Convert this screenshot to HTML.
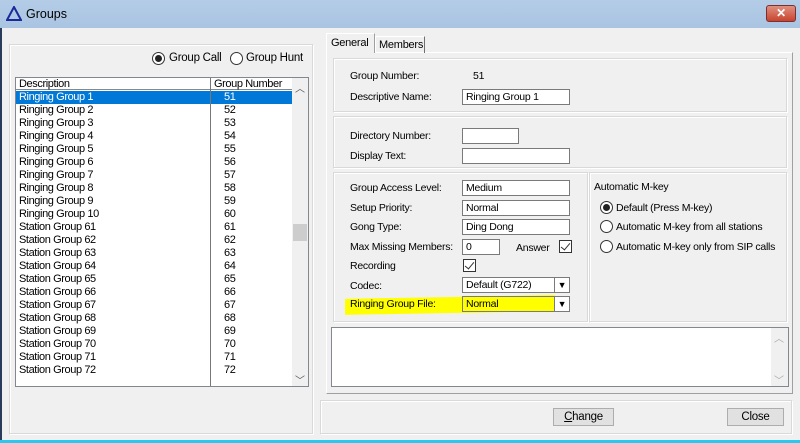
<!DOCTYPE html><html><head><style>
*{margin:0;padding:0;box-sizing:border-box;white-space:nowrap}
body{width:800px;height:443px;overflow:hidden;background:#f0f0f0;font-family:"Liberation Sans",sans-serif;font-size:10.5px;letter-spacing:-0.25px;color:#000;position:relative}
.a{position:absolute}
.box{position:absolute;border:1px solid #d9d9d9;border-right-color:#fff;border-bottom-color:#fff;box-shadow:inset -1px -1px 0 #d9d9d9,inset 1px 1px 0 #fff}
.in{position:absolute;background:#fff;border:1px solid #7a7a7a;height:16px;padding:1px 3px;line-height:13px}
.rad{position:absolute;width:13px;height:13px;border:1px solid #333;border-radius:50%;background:#fff}
.rad.on::after{content:"";position:absolute;left:2px;top:2px;width:7px;height:7px;border-radius:50%;background:#222}
.chk{position:absolute;width:13px;height:13px;border:1px solid #333;background:#fff}
.chk::after{content:"";position:absolute;left:3px;top:0px;width:4px;height:8px;border:solid #333;border-width:0 1px 1px 0;transform:rotate(40deg)}
.dd{position:absolute;right:0;top:0;width:15px;height:14px;border-left:1px solid #7a7a7a;background:#fff;font-size:9px;text-align:center;line-height:14px}
.btn{position:absolute;border:1px solid #adadad;background:#e1e1e1;text-align:center;line-height:16px;font-size:11.5px}
.row{height:13px;line-height:13px;position:relative}
#l{font-size:11px;letter-spacing:-0.4px}
</style></head><body>
<div class="a" style="left:0;top:0;width:800px;height:28px;background:linear-gradient(#b4cce6,#a9c4e2)"></div>
<svg class="a" style="left:6px;top:6px" width="16" height="15"><polygon points="8,1 15,14 1,14" fill="none" stroke="#1a2a9a" stroke-width="2"/></svg>
<div class="a" style="left:26px;top:7px;font-size:12.5px;letter-spacing:0">Groups</div>
<div class="a" style="left:766px;top:5px;width:30px;height:17px;background:linear-gradient(#e09080,#c8442e);border:1px solid #7a3030;border-radius:3px;color:#fff;text-align:center;font-weight:bold;line-height:15px;font-size:12px">✕</div>
<div class="a" style="left:0;top:28px;width:2px;height:415px;background:#2a3a5a"></div>
<div class="a" style="left:0;top:440px;width:800px;height:3px;background:#29c8f0"></div>

<div class="box" style="left:9px;top:44px;width:305px;height:391px"></div>
<div class="rad on" style="left:152px;top:52px"></div><div class="a" style="left:169px;top:52px;font-size:11.5px">Group Call</div>
<div class="rad" style="left:230px;top:52px"></div><div class="a" style="left:246px;top:52px;font-size:11.5px">Group Hunt</div>
<div class="a" style="left:15px;top:77px;width:294px;height:310px;background:#fff;border:1px solid #828790"></div>
<div class="a" style="left:16px;top:78px;width:276px;height:12px;line-height:12px;border-bottom:1px solid #888;font-size:11px;letter-spacing:-0.4px"><span style="position:absolute;left:3px">Description</span><span style="position:absolute;left:198px">Group Number</span></div>
<div class="a" style="left:210px;top:78px;width:1px;height:308px;background:#777"></div>
<div class="a" style="left:292px;top:78px;width:16px;height:308px;background:#f0f0f0"></div>
<div class="a" style="left:293px;top:224px;width:14px;height:17px;background:#cdcdcd"></div>
<div class="a" style="left:295px;top:80px;font-size:10px;color:#555">︿</div>
<div class="a" style="left:295px;top:372px;font-size:10px;color:#555">﹀</div>
<div class="a" style="left:16px;top:91px;width:276px" id="l">
<div class="row" style="background:#0078d7;color:#fff"><span style="position:absolute;left:3px">Ringing Group 1</span><span style="position:absolute;left:194px;border-left:1px solid #777;padding-left:13px;height:13px">51</span></div>
<div class="row"><span style="position:absolute;left:3px">Ringing Group 2</span><span style="position:absolute;left:208px">52</span></div>
<div class="row"><span style="position:absolute;left:3px">Ringing Group 3</span><span style="position:absolute;left:208px">53</span></div>
<div class="row"><span style="position:absolute;left:3px">Ringing Group 4</span><span style="position:absolute;left:208px">54</span></div>
<div class="row"><span style="position:absolute;left:3px">Ringing Group 5</span><span style="position:absolute;left:208px">55</span></div>
<div class="row"><span style="position:absolute;left:3px">Ringing Group 6</span><span style="position:absolute;left:208px">56</span></div>
<div class="row"><span style="position:absolute;left:3px">Ringing Group 7</span><span style="position:absolute;left:208px">57</span></div>
<div class="row"><span style="position:absolute;left:3px">Ringing Group 8</span><span style="position:absolute;left:208px">58</span></div>
<div class="row"><span style="position:absolute;left:3px">Ringing Group 9</span><span style="position:absolute;left:208px">59</span></div>
<div class="row"><span style="position:absolute;left:3px">Ringing Group 10</span><span style="position:absolute;left:208px">60</span></div>
<div class="row"><span style="position:absolute;left:3px">Station Group 61</span><span style="position:absolute;left:208px">61</span></div>
<div class="row"><span style="position:absolute;left:3px">Station Group 62</span><span style="position:absolute;left:208px">62</span></div>
<div class="row"><span style="position:absolute;left:3px">Station Group 63</span><span style="position:absolute;left:208px">63</span></div>
<div class="row"><span style="position:absolute;left:3px">Station Group 64</span><span style="position:absolute;left:208px">64</span></div>
<div class="row"><span style="position:absolute;left:3px">Station Group 65</span><span style="position:absolute;left:208px">65</span></div>
<div class="row"><span style="position:absolute;left:3px">Station Group 66</span><span style="position:absolute;left:208px">66</span></div>
<div class="row"><span style="position:absolute;left:3px">Station Group 67</span><span style="position:absolute;left:208px">67</span></div>
<div class="row"><span style="position:absolute;left:3px">Station Group 68</span><span style="position:absolute;left:208px">68</span></div>
<div class="row"><span style="position:absolute;left:3px">Station Group 69</span><span style="position:absolute;left:208px">69</span></div>
<div class="row"><span style="position:absolute;left:3px">Station Group 70</span><span style="position:absolute;left:208px">70</span></div>
<div class="row"><span style="position:absolute;left:3px">Station Group 71</span><span style="position:absolute;left:208px">71</span></div>
<div class="row"><span style="position:absolute;left:3px">Station Group 72</span><span style="position:absolute;left:208px">72</span></div>
</div>

<div class="a" style="left:326px;top:52px;width:467px;height:342px;border:1px solid #fff;border-right-color:#a0a0a0;border-bottom-color:#a0a0a0"></div>
<div class="a" style="left:326px;top:33px;width:49px;height:20px;background:#f0f0f0;border:1px solid #fff;border-bottom:none;border-right-color:#a0a0a0;padding:3px 0 0 4px;font-size:11px">General</div>
<div class="a" style="left:375px;top:36px;width:50px;height:17px;border:1px solid #fff;border-bottom:none;border-right-color:#707070;padding:2px 0 0 3px;font-size:11px">Members</div>
<div class="box" style="left:333px;top:58px;width:455px;height:55px"></div>
<div class="a" style="left:350px;top:70px">Group Number:</div><div class="a" style="left:473px;top:70px">51</div>
<div class="a" style="left:350px;top:91px">Descriptive Name:</div><div class="in" style="left:462px;top:89px;width:108px">Ringing Group 1</div>
<div class="box" style="left:333px;top:116px;width:455px;height:53px"></div>
<div class="a" style="left:350px;top:130px">Directory Number:</div><div class="in" style="left:462px;top:128px;width:57px"></div>
<div class="a" style="left:350px;top:150px">Display Text:</div><div class="in" style="left:462px;top:148px;width:108px"></div>
<div class="box" style="left:333px;top:172px;width:256px;height:151px"></div>
<div class="box" style="left:589px;top:172px;width:199px;height:151px"></div>
<div class="a" style="left:350px;top:182px">Group Access Level:</div><div class="in" style="left:462px;top:180px;width:108px">Medium</div>
<div class="a" style="left:350px;top:202px">Setup Priority:</div><div class="in" style="left:462px;top:200px;width:108px">Normal</div>
<div class="a" style="left:350px;top:221px">Gong Type:</div><div class="in" style="left:462px;top:219px;width:108px">Ding Dong</div>
<div class="a" style="left:350px;top:241px">Max Missing Members:</div><div class="in" style="left:462px;top:239px;width:38px">0</div>
<div class="a" style="left:516px;top:242px">Answer</div><div class="chk" style="left:559px;top:240px"></div>
<div class="a" style="left:350px;top:260px">Recording</div><div class="chk" style="left:463px;top:259px"></div>
<div class="a" style="left:350px;top:280px">Codec:</div><div class="in" style="left:462px;top:277px;width:108px">Default (G722)<div class="dd">▼</div></div>
<div class="a" style="left:345px;top:297px;width:210px;height:16px;background:#ffff00;transform:skewY(-1deg)"></div>
<div class="a" style="left:350px;top:298px">Ringing Group File:</div><div class="in" style="left:462px;top:296px;width:108px;background:#ffff00">Normal<div class="dd">▼</div></div>
<div class="a" style="left:594px;top:181px">Automatic M-key</div>
<div class="rad on" style="left:600px;top:201px"></div><div class="a" style="left:616px;top:202px">Default (Press M-key)</div>
<div class="rad" style="left:600px;top:220px"></div><div class="a" style="left:616px;top:221px">Automatic M-key from all stations</div>
<div class="rad" style="left:600px;top:240px"></div><div class="a" style="left:616px;top:241px">Automatic M-key only from SIP calls</div>
<div class="a" style="left:331px;top:327px;width:458px;height:60px;background:#fff;border:1px solid #828790"></div>
<div class="a" style="left:771px;top:328px;width:17px;height:58px;background:#f0f0f0"></div>
<div class="a" style="left:774px;top:330px;font-size:10px;color:#aaa">︿</div>
<div class="a" style="left:774px;top:372px;font-size:10px;color:#aaa">﹀</div>
<div class="box" style="left:320px;top:400px;width:473px;height:35px"></div>
<div class="btn" style="left:553px;top:408px;width:61px;height:18px"><u>C</u>hange</div>
<div class="btn" style="left:727px;top:408px;width:57px;height:18px">Close</div>
</body></html>
